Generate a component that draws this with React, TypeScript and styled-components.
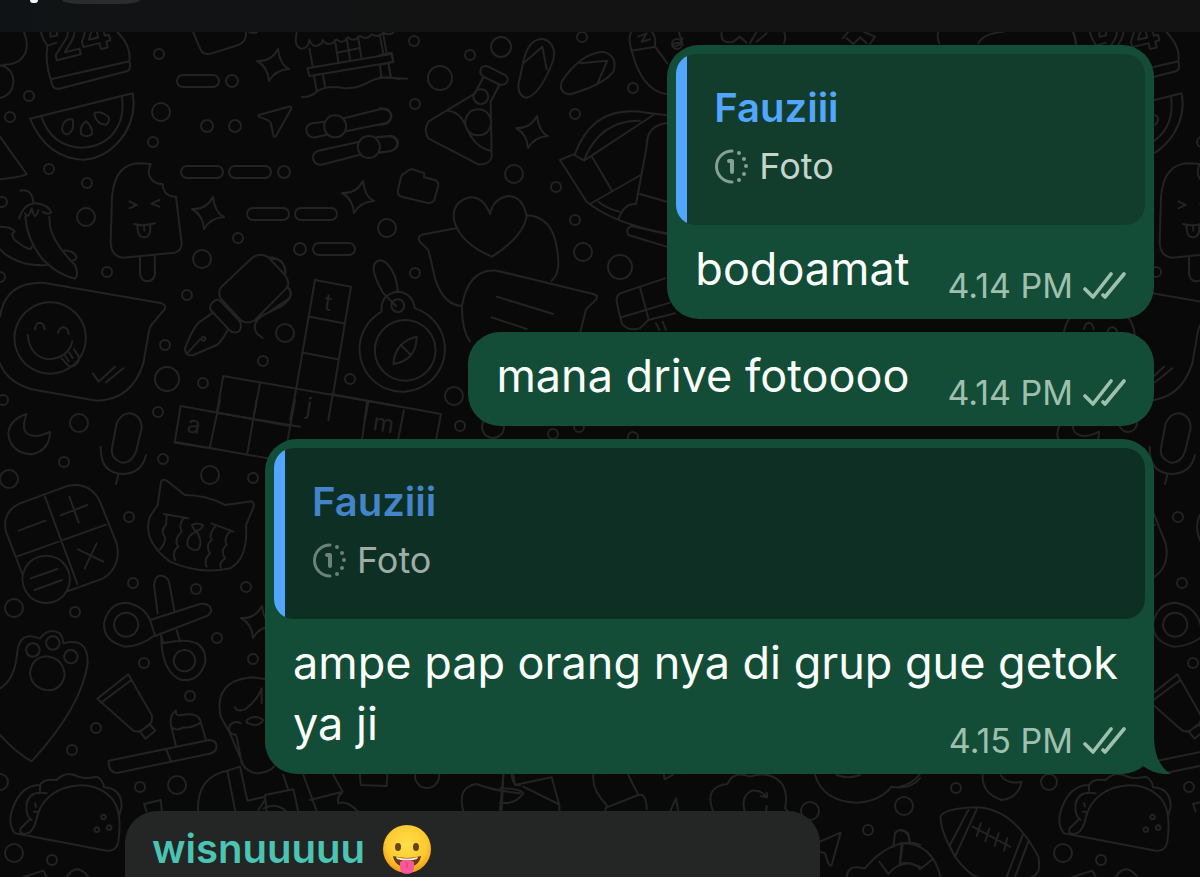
import React from "react";
import styled, { createGlobalStyle } from "styled-components";

const GlobalStyle = createGlobalStyle`
  *, *::before, *::after { box-sizing: border-box; }
  body {
    margin: 0;
    background: #090909;
    font-family: Inter, "Liberation Sans", sans-serif;
  }
`;

const Screen = styled.div`
  position: relative;
  display: flex;
  flex-direction: column;
  height: 100vh;
  overflow: hidden;
  background: #090909;
`;

const TopBar = styled.header`
  display: flex;
  align-items: flex-start;
  gap: 24px;
  flex: none;
  height: 32px;
  padding-left: 30px;
  background: linear-gradient(90deg, #101315, #131313 40%, #131313);
  z-index: 1;
`;

const BackTip = styled.span`
  width: 8px;
  height: 3px;
  border-radius: 0 0 4px 4px;
  background: #f4f4f4;
`;

const AvatarEdge = styled.span`
  width: 78px;
  height: 4px;
  border-radius: 0 0 20px 20px / 0 0 4px 4px;
  background: #2b2c2e;
`;

const WallpaperArt = styled.svg`
  position: absolute;
  inset: 0;
  width: 100%;
  height: 100%;
  fill: none;
  stroke: #232323;
  stroke-width: 2;
  stroke-linecap: round;
  stroke-linejoin: round;

  text {
    font-family: Inter, "Liberation Sans", sans-serif;
  }
`;

const Thread = styled.main`
  position: relative;
  flex: 1;
  display: flex;
  flex-direction: column;
  gap: 13px;
  min-height: 0;
  padding: 13px 46px 0 125px;
`;

const OutBubble = styled.article`
  position: relative;
  flex: none;
  align-self: flex-end;
  width: fit-content;
  max-width: 889px;
  padding: 9px;
  border-radius: 32px;
  background: #144d37;
  color: #fbfffc;
`;

const PlainBubble = styled(OutBubble)`
  padding-top: 0;
`;

const Quote = styled.blockquote<{ $dimmed?: boolean }>`
  margin: 0;
  height: 171px;
  padding: 26px 26px 28px 38px;
  border-radius: 20px;
  background: linear-gradient(
    90deg,
    #53a6fd 11px,
    ${(p) => (p.$dimmed ? "#0e3024" : "#123d2d")} 11px
  );
  color: ${(p) => (p.$dimmed ? "#9fada6" : "#c4d5cc")};
`;

const QuoteName = styled.div<{ $dimmed?: boolean }>`
  font-size: 40px;
  line-height: 56px;
  font-weight: 600;
  color: ${(p) => (p.$dimmed ? "#4384cb" : "#53a6fd")};
`;

const QuoteKind = styled.div`
  display: flex;
  align-items: center;
  gap: 10px;
  font-size: 36px;
  line-height: 61px;

  svg { opacity: 0.65; }
`;

const Body = styled.div`
  display: flow-root;
  padding: 13px 19px 0;
  font-size: 45px;
  line-height: 61px;
`;

const Meta = styled.span`
  float: right;
  display: flex;
  align-items: center;
  gap: 10px;
  height: 49px;
  margin: 23px 0 0 38px;
  font-size: 34px;
  line-height: 49px;
  color: #9fc0af;
`;

const TailShape = styled.svg`
  position: absolute;
  right: -17px;
  bottom: 0;
  fill: #144d37;
`;

const InBubble = styled.article`
  flex: none;
  align-self: flex-start;
  width: 695px;
  max-width: 100%;
  height: 160px;
  margin-top: 24px;
  padding: 9px 27px;
  border-radius: 32px;
  background: #242625;
`;

const Sender = styled.div`
  display: flex;
  align-items: center;
  gap: 17px;
  font-size: 40px;
  line-height: 58px;
  font-weight: 600;
  color: #4bc4b4;
`;

const SMALL = 5;
const circles: [number, number, number?][] = [
  [159, 54], [232, 81, 6], [29, 96], [10, 117], [161, 112, 9], [153, 142], [207, 126, 6],
  [235, 126, 6], [49, 169], [87, 183], [284, 172, 6], [2, 202], [86, 217, 9], [238, 238],
  [300, 249, 6], [202, 259, 9], [387, 228, 9], [107, 272], [187, 295], [285, 333, 9],
  [165, 345], [263, 361], [167, 379, 12], [203, 383], [350, 379], [158, 412], [3, 400],
  [0, 277], [79, 423, 9], [64, 462], [9, 479, 9], [163, 459], [210, 475, 9], [253, 478],
  [129, 517], [133, 583], [196, 589], [246, 587], [14, 608, 9], [75, 612], [217, 638],
  [144, 663], [253, 659], [190, 696], [96, 728], [72, 750], [140, 787], [177, 785, 9],
  [0, 782, 8], [14, 853, 9], [52, 860], [414, 41], [470, 55], [501, 47, 10], [440, 78, 12],
  [415, 104], [582, 37], [633, 88], [575, 114], [514, 174, 9], [556, 187], [575, 220],
  [583, 252, 9], [620, 267, 12], [415, 273], [677, 44], [454, 396, 9], [460, 426],
  [493, 427, 11], [553, 434], [579, 427], [633, 437], [956, 788], [904, 806, 9],
  [868, 830], [810, 811, 9], [427, 776, 12],
];

const stars: [number, number][] = [[273, 65], [358, 197], [208, 213], [532, 132], [257, 622]];

const pills: [number, number][] = [[177, 75], [181, 166], [229, 166], [247, 208], [295, 208], [313, 243]];

/* Doodles are plotted on a grid three times finer than the page. */
const sheets: { at: string; d: string[] }[] = [
  {
    at: "translate(0 0)",
    d: [
      // cloud and calendar
      "M70 92Q95 150 60 180Q40 195 10 194M0 196Q40 205 40 245Q38 285 0 294",
      "M122 96Q128 118 142 137Q135 190 152 238L388 184Q395 140 352 96M142 137L170 128M152 238L158 258Q163 268 178 266L380 214Q392 210 390 192L388 184",
      // picture frame
      "M580 98L600 145Q610 168 635 160L715 135Q740 125 738 98M748 96Q760 102 772 96",
      // market stall
      "M890 98Q880 140 905 146Q925 145 928 120Q940 150 965 130L968 120Q985 145 1010 118Q1025 135 1045 112Q1060 128 1080 108Q1100 122 1115 103Q1135 115 1150 98Q1165 108 1180 98M928 146L938 198M1005 120L1015 186M1040 115L1050 178M1074 110L1084 172M1150 104L1160 160M1010 158L1080 144",
      "M922 205L1174 162L1180 186L928 228ZM942 228L950 272M968 222L976 262M1140 196L1144 232M1166 190L1172 230M906 291Q930 292 950 275Q980 255 1030 264Q1070 268 1110 244Q1150 225 1200 238",
      // watermelon
      "M90 356L398 280Q410 340 375 400Q325 475 250 479Q140 475 90 356ZM124 350Q155 440 245 443Q330 440 360 365Q372 330 366 290",
      "M218 358Q190 355 186 385Q188 405 205 402Q225 390 218 358ZM258 364Q238 380 243 402Q258 415 276 402Q278 380 258 364ZM282 340Q300 330 325 350Q332 365 318 374Q290 375 282 340Z",
      // paper plane
      "M776 345L866 320Q876 318 873 328L828 408Q822 414 820 405L812 368Q808 360 776 350Z",
      // sliders
      "M975 365L936 370Q915 376 920 396Q926 414 946 412L980 404M1032 355L1146 326Q1168 322 1173 345Q1172 364 1155 370L1038 394M1075 426L955 452Q935 460 940 480Q948 496 965 494L1080 464M1128 412L1168 408Q1192 412 1192 432Q1188 450 1170 454L1138 458",
      "M1005 346A33 33 0 1 0 1006 346ZM1106 408A33 33 0 1 0 1107 408Z",
      // triangle
      "M0 410L80 522Q70 530 0 538",
      // ice pop
      "M332 730L336 590Q345 490 420 490L452 492Q440 520 452 535Q465 553 488 552Q490 590 528 590L545 730Q545 752 525 758L370 773Q335 770 332 730ZM388 604L410 615L388 625M478 600L454 611L478 620M402 672Q430 680 465 670M412 676Q412 712 432 712Q455 710 450 674M432 676L433 692",
      "M420 770L420 822Q424 844 443 844Q462 842 465 822L464 766",
      // chilli
      "M60 572Q95 565 100 606M58 656Q70 610 110 610Q145 615 154 638Q140 645 128 635M75 640Q85 660 95 625Q105 668 115 630M76 650Q80 720 130 780Q175 825 225 836Q238 825 225 795Q160 730 150 680L148 650M0 680Q35 680 44 695Q30 700 44 720Q95 760 95 740M0 748Q50 800 140 795M188 752Q220 750 230 772Q228 782 212 782",
    ],
  },
  {
    at: "translate(0 600)",
    d: [
      // speech balloon with a grin
      "M0 350Q15 245 130 248L485 310Q502 316 492 330L458 370Q448 380 444 410L430 490Q395 600 290 602L95 568Q20 545 0 490M150 307A107 107 0 1 0 151 307ZM83 405Q90 470 145 478Q205 475 217 424M105 388Q108 368 120 368Q132 370 134 388M174 398Q180 380 192 382Q205 386 206 402M185 475L204 496Q214 504 226 494Q242 482 234 466L222 448M196 468L206 484M208 458L218 474M278 520L296 545L345 500M318 547L370 505",
      // fountain pen
      "M665 260L755 175Q780 155 805 172L855 225Q870 245 862 262L765 360Q742 375 722 360L662 295Q652 275 665 260ZM635 310Q650 292 662 304L720 365Q728 385 715 395Q700 402 688 390L632 330Q627 320 635 310ZM636 340L600 365Q580 380 555 445Q555 470 580 465L650 435Q665 425 683 390M562 460L600 418M610 410A6 6 0 1 0 611 410ZM815 178Q850 170 857 216M866 265Q885 290 845 318L800 340Q750 365 770 400L788 414",
      // crossword
      "M945 240L1053 260L998 590M945 240L888 570L870 660M930 350L1030 370M910 458L1013 478M670 528L1200 620M670 528L650 640M780 550L760 655M998 585L985 660M1105 606L1095 660M542 618L870 678M542 618L524 728L650 748",
    ],
  },
  {
    at: "translate(810 690)",
    d: [
      // compass
      "M335 245A128 128 0 1 0 435 235Q425 185 380 185Q330 195 335 245ZM405 270A91 91 0 1 0 406 270ZM383 208A19 19 0 1 0 384 208ZM378 228L340 190Q305 130 312 105Q325 80 350 100Q380 130 383 182M440 320Q375 335 370 402Q440 390 440 320ZM392 345L420 372",
      "M0 82Q45 85 46 130M50 170Q70 185 58 205L0 244",
    ],
  },
  {
    at: "translate(0 1200)",
    d: [
      // moon
      "M80 42Q55 105 105 108Q125 108 150 95Q150 150 95 163Q35 160 25 105Q25 60 80 42Z",
      // microphone
      "M350 70Q365 38 392 40Q425 48 425 85L408 155Q395 190 365 188Q335 178 335 150ZM302 140Q300 220 370 222Q425 220 438 165M355 224L348 252",
      // calculator
      "M60 310L205 257Q270 245 300 305L350 430Q365 500 310 535L205 573M60 310Q5 335 18 395L68 525M135 290L232 552M50 470L318 374M56 392L136 362M182 346L262 315M208 290L236 368M234 448L310 485M290 430L254 505M138 467A71 71 0 1 0 139 467ZM92 535L172 507M104 570L186 540",
      // crying cat
      "M555 285Q620 285 675 315L755 304Q768 310 755 335L738 375Q745 475 690 505Q600 525 510 485Q425 420 450 350L473 315L483 245Q490 235 500 242ZM492 342L565 355M634 370L700 395M500 345L498 375Q480 390 494 410Q498 430 480 448M550 355Q535 375 545 395Q520 420 535 440Q515 455 525 480M645 380Q625 405 635 420Q615 435 630 460Q610 480 620 500M690 395Q670 415 680 435Q660 450 675 475Q655 490 663 503M575 376Q590 365 610 376Q600 395 585 392ZM590 394Q610 430 595 448Q575 455 562 435Q560 405 590 394Z",
      // crossword, lower rows
      "M630 140L660 0M742 160L770 0M862 125L885 0M524 125L860 185M650 38L900 80",
      // scissors
      "M473 640L462 555Q465 525 485 527Q505 530 508 550L523 632M450 660L600 612Q630 608 634 632Q628 648 610 652L465 708M378 638A36 36 0 1 0 379 638ZM378 608Q430 615 450 660L465 706Q420 740 375 740Q310 725 312 670Q325 610 378 608ZM483 705L490 730Q620 700 616 785Q600 845 545 840Q485 820 483 705ZM530 690L540 725M553 750A32 32 0 1 0 554 750Z",
    ],
  },
  {
    at: "translate(0 1860)",
    d: [
      // paw
      "M0 205Q45 180 52 95Q60 30 120 56Q145 20 180 40Q190 55 190 70Q265 50 263 130Q245 260 95 424Q50 400 0 345M98 70A20 20 0 1 0 99 70ZM158 49A20 20 0 1 0 159 49ZM212 90A20 20 0 1 0 213 90ZM140 109Q190 115 194 165Q185 210 145 211Q95 205 90 160Q95 112 140 109Z",
      // toothpaste and brush
      "M292 236L385 163L455 285Q460 305 445 318L420 333Q405 338 395 328ZM303 248L394 180M420 335L448 312L466 332L436 356ZM326 422L628 360Q655 362 648 388Q640 400 625 402L350 459Q325 458 326 422ZM500 392L512 422M528 378L515 325Q505 285 528 272Q525 290 545 285Q600 275 603 310L618 360M515 322Q530 335 550 322Q575 325 603 308",
      // doctor
      "M728 430L690 340L662 290Q640 180 760 172L800 178M705 262Q710 280 740 265Q775 235 785 205L785 250M708 345Q680 340 690 315Q705 300 722 310M740 300Q765 280 790 300Q775 325 740 308ZM710 350L725 430Q745 460 775 460Q810 455 822 440M720 440L682 452Q590 470 594 575M682 452L706 575M720 440L742 542L795 530M795 525L880 508L895 575M795 525L800 575M850 465L865 510",
      // taco
      "M45 640Q20 610 40 560Q65 495 120 495Q130 475 170 480Q200 450 235 470Q255 478 290 470Q310 480 312 502Q365 505 365 560L358 585M140 520Q90 510 80 550Q75 585 95 600M45 640L320 692Q350 695 355 665Q370 560 325 525Q270 480 190 505Q125 530 110 595Q100 640 75 642Q55 640 62 625L90 598M120 495L120 512M105 550L108 560M102 575L112 575",
      "M310 584A7 7 0 1 0 311 584ZM290 622A7 7 0 1 0 291 622ZM327 616A7 7 0 1 0 328 616ZM432 552L482 540L486 575M432 552L440 575M70 771L130 752L140 771M200 771Q230 725 265 771",
    ],
  },
  {
    at: "translate(1140 90)",
    d: [
      "M0 20L10 70M0 75L35 68L40 95L0 104M25 100L32 138M0 142Q40 145 82 146M0 235Q35 240 35 260Q30 285 0 285M0 322L35 318Q60 325 52 350Q45 365 0 367",
      // flask
      "M305 112Q315 105 325 110L375 135Q390 145 378 160Q368 168 355 162L310 140Q295 130 305 112ZM310 142L285 190L145 275Q130 300 145 325L295 403Q330 405 335 380L332 215L358 165M302 178A22 22 0 1 0 303 178ZM294 238A39 39 0 1 0 295 238ZM205 243Q240 245 258 290Q285 355 333 362",
      // flip-flops
      "M430 95Q445 25 490 27Q530 40 520 90Q480 195 440 203Q415 200 415 165ZM432 98L487 50L500 118M545 155Q600 70 670 65Q715 80 700 125Q670 165 570 193Q535 190 545 155ZM600 100L682 92L652 162",
      // sock and umbrella
      "M755 62Q740 15 760 0M825 50Q830 15 810 0M755 62L825 50L862 100M755 62Q785 180 858 192M775 20L800 10L785 35L810 28",
      "M540 390L580 373L612 392L820 255M585 372Q640 220 800 248L860 256M612 390Q660 270 780 272M636 380L696 482M540 390L620 515Q700 580 860 610M860 280Q800 285 800 350L768 522Q730 520 715 570M630 522L782 435M780 492L860 515M655 515Q680 535 718 545M860 650L745 615Q735 595 755 588L860 612",
      // folder
      "M75 430Q90 412 105 420L133 430L132 442L165 450Q178 455 174 470L163 510Q155 522 140 518L65 500Q50 495 54 480L62 445Q65 432 75 430Z",
      // heart and balloons
      "M330 552Q310 500 270 502Q215 515 222 570Q240 640 336 680Q430 620 440 560Q430 500 385 498Q340 505 330 552ZM442 556Q515 560 530 650Q545 730 515 752M232 594L125 614Q110 622 120 636L145 660Q155 700 165 745Q190 825 246 828M246 828Q265 715 350 722L640 792Q660 798 645 812L618 838L600 910M246 828Q245 900 270 935M350 800L520 852M335 862L440 897",
      // chocolate bar
      "M855 745L720 790Q705 800 712 825L725 880Q745 905 780 895L805 870L885 850M780 772L805 865M725 862L870 818M828 880L838 900M848 875L858 900",
    ],
  },
  {
    at: "translate(1980 90)",
    d: [
      "M55 0L68 45Q40 30 38 50Q60 50 68 25M185 5Q180 45 220 35L240 20L260 38M290 5L270 40M320 10L290 35M370 0Q380 20 372 40M548 25L565 5Q595 -10 610 5L645 20L630 42M560 25L580 42L600 22L620 40M835 5Q830 25 838 40M955 40Q970 10 1030 5M1240 5L1250 40",
    ],
  },
  {
    at: "translate(2700 2040)",
    d: [
      // lower edge: balloon, moon, football
      "M0 320Q40 310 60 282M248 285Q245 340 305 360Q355 355 365 305Q320 315 302 285",
      "M122 410Q130 385 230 382Q340 385 415 530Q425 585 395 591M122 410Q120 450 165 530Q205 585 240 595M135 470L165 530L230 388M150 495L205 390M320 591L370 460M345 591L385 485M218 440L330 500M242 430L230 468M268 446L256 484M296 460L284 498M322 474L312 512M0 450Q30 455 30 490M0 490Q95 485 122 591M5 490L0 545M95 540L60 568Q45 545 0 550",
    ],
  },
  {
    at: "translate(1500 2250)",
    d: [
      "M10 75L5 180M0 115Q60 115 70 130Q45 165 0 158M40 75L45 105L155 82L178 165L178 185M70 110L175 162M280 75Q275 120 320 165L315 185M385 75L415 135L320 172M415 135Q440 130 440 178M492 75L494 88L518 75M510 185L528 145L535 185M640 185Q610 110 682 102Q700 60 750 80Q810 60 845 100Q865 130 855 175L865 185M735 185Q720 140 755 122Q785 120 800 142M800 128L802 142L782 138M800 168L798 185",
      "M945 75Q970 155 1070 158Q1140 155 1175 110Q1230 120 1260 85M1010 75Q1045 88 1080 75M960 275L1022 248L995 345Q990 350 985 340L975 310L960 305M1180 290L1185 250Q1200 230 1225 250L1228 275M1040 380Q1045 350 1070 352L1095 355Q1150 290 1210 280Q1240 275 1260 285M1138 335L1165 372M1208 285L1200 340M1165 372Q1190 340 1230 340L1260 350",
    ],
  },
  {
    at: "translate(360 2250)",
    d: [
      "M550 75L590 183M570 150L668 125L640 75M665 130Q650 140 655 160Q680 150 715 185M720 75L722 105L800 108L802 75M1030 185Q1010 110 1070 102Q1110 120 1200 130M1150 75L1140 180M1175 75Q1180 110 1200 105M415 180L435 150M430 175Q470 155 500 185",
    ],
  },
];

function Wallpaper() {
  return (
    <WallpaperArt aria-hidden="true">
      <defs>
        <g id="doodles">
          {circles.map(([x, y, r], i) => (
            <circle key={i} cx={x} cy={y} r={r ?? SMALL} />
          ))}
          {pills.map(([x, y], i) => (
            <rect key={i} x={x} y={y} width="42" height="12" rx="6" />
          ))}
          {stars.map(([x, y], i) => (
            <path
              key={i}
              transform={`translate(${x} ${y})`}
              d="M5-16Q7 0 16 4Q2 5-4 16Q-5 2-16-4Q-2-3 5-16Z"
            />
          ))}
          {sheets.map((sheet) => (
            <g key={sheet.at} transform={`scale(.33333) ${sheet.at}`} strokeWidth="6">
              {sheet.d.map((d, i) => (
                <path key={i} d={d} />
              ))}
            </g>
          ))}
          <g fontSize="48" fontWeight="700">
            <text x="54" y="61" transform="rotate(-14 54 61)">24</text>
          </g>
          <g fontSize="24" fill="#232323" stroke="none">
            <text x="323" y="310" transform="rotate(9 323 310)">t</text>
            <text x="305" y="414" transform="rotate(9 305 414)">j</text>
            <text x="186" y="432" transform="rotate(9 186 432)">a</text>
            <text x="372" y="430" transform="rotate(9 372 430)">m</text>
          </g>
          <path d="M367 402L362 440M404 410L398 440M441 414L436 440M331 394L441 414" />
        </g>
      </defs>
      <use href="#doodles" />
      <use href="#doodles" x="1049" />
    </WallpaperArt>
  );
}

function ViewOnceIcon() {
  return (
    <svg width="35" height="35" viewBox="0 0 35 35" fill="none" stroke="currentColor" strokeWidth="3" strokeLinecap="round" strokeLinejoin="round" aria-hidden="true">
      <path d="M18 2A15 15 0 0 0 18 33" />
      <path d="M15 12H18V23" strokeWidth="4" />
      <g fill="currentColor" stroke="none">
        <circle cx="25" cy="4" r="2" />
        <circle cx="30" cy="10" r="2" />
        <circle cx="32" cy="17" r="2" />
        <circle cx="30" cy="25" r="2" />
        <circle cx="25" cy="31" r="2" />
      </g>
    </svg>
  );
}

function Ticks() {
  return (
    <svg width="43" height="29" viewBox="0 0 43 29" fill="none" stroke="currentColor" strokeWidth="3.6" strokeLinecap="round" strokeLinejoin="round" aria-label="Delivered" role="img">
      <path d="M2 18L10 26L28 3" />
      <path d="M20 24L22 26L41 3" />
    </svg>
  );
}

function TongueEmoji() {
  return (
    <svg width="50" height="50" viewBox="0 0 50 50" role="img" aria-label="Face with tongue">
      <defs>
        <radialGradient id="face" cx=".5" cy=".4" r=".6">
          <stop offset="0" stopColor="#ffe04a" />
          <stop offset=".7" stopColor="#fdc92f" />
          <stop offset="1" stopColor="#ee9a1c" />
        </radialGradient>
      </defs>
      <circle cx="25" cy="25" r="24" fill="url(#face)" />
      <ellipse cx="16" cy="23" rx="3" ry="4" fill="#6a4212" />
      <ellipse cx="34" cy="23" rx="3" ry="4" fill="#6a4212" />
      <path d="M11 32Q25 36 39 32Q37 43 25 43Q13 43 11 32Z" fill="#6b3a12" />
      <path d="M14 33Q25 36 36 33L35 35Q25 38 15 35Z" fill="#fff3d6" />
      <path d="M18 38Q25 34 32 38V43Q32 50 25 50Q18 50 18 43Z" fill="#f8589b" />
      <path d="M25 38V44" stroke="#d63a7d" strokeWidth="1" />
    </svg>
  );
}

function QuotedPhoto({ name, dimmed }: { name: string; dimmed?: boolean }) {
  return (
    <Quote $dimmed={dimmed}>
      <QuoteName $dimmed={dimmed}>{name}</QuoteName>
      <QuoteKind>
        <ViewOnceIcon />
        Foto
      </QuoteKind>
    </Quote>
  );
}

function MessageText({ text, time }: { text: string; time: string }) {
  return (
    <Body>
      {text}
      <Meta>
        <time>{time}</time>
        <Ticks />
      </Meta>
    </Body>
  );
}

export default function App() {
  return (
    <Screen>
      <GlobalStyle />
      <Wallpaper />
      <TopBar>
        <BackTip />
        <AvatarEdge />
      </TopBar>
      <Thread>
        <OutBubble>
          <QuotedPhoto name="Fauziii" />
          <MessageText text="bodoamat" time="4.14 PM" />
        </OutBubble>
        <PlainBubble>
          <MessageText text="mana drive fotoooo" time="4.14 PM" />
        </PlainBubble>
        <OutBubble>
          <QuotedPhoto name="Fauziii" dimmed />
          <MessageText text="ampe pap orang nya di grup gue getok ya ji" time="4.15 PM" />
          <TailShape width="40" height="38" viewBox="0 0 40 38" aria-hidden="true">
            <path d="M23 0C23 18 29 32 40 38C30 39 20 36 12 30L4 24Z" />
          </TailShape>
        </OutBubble>
        <InBubble>
          <Sender>
            wisnuuuuu
            <TongueEmoji />
          </Sender>
        </InBubble>
      </Thread>
    </Screen>
  );
}
